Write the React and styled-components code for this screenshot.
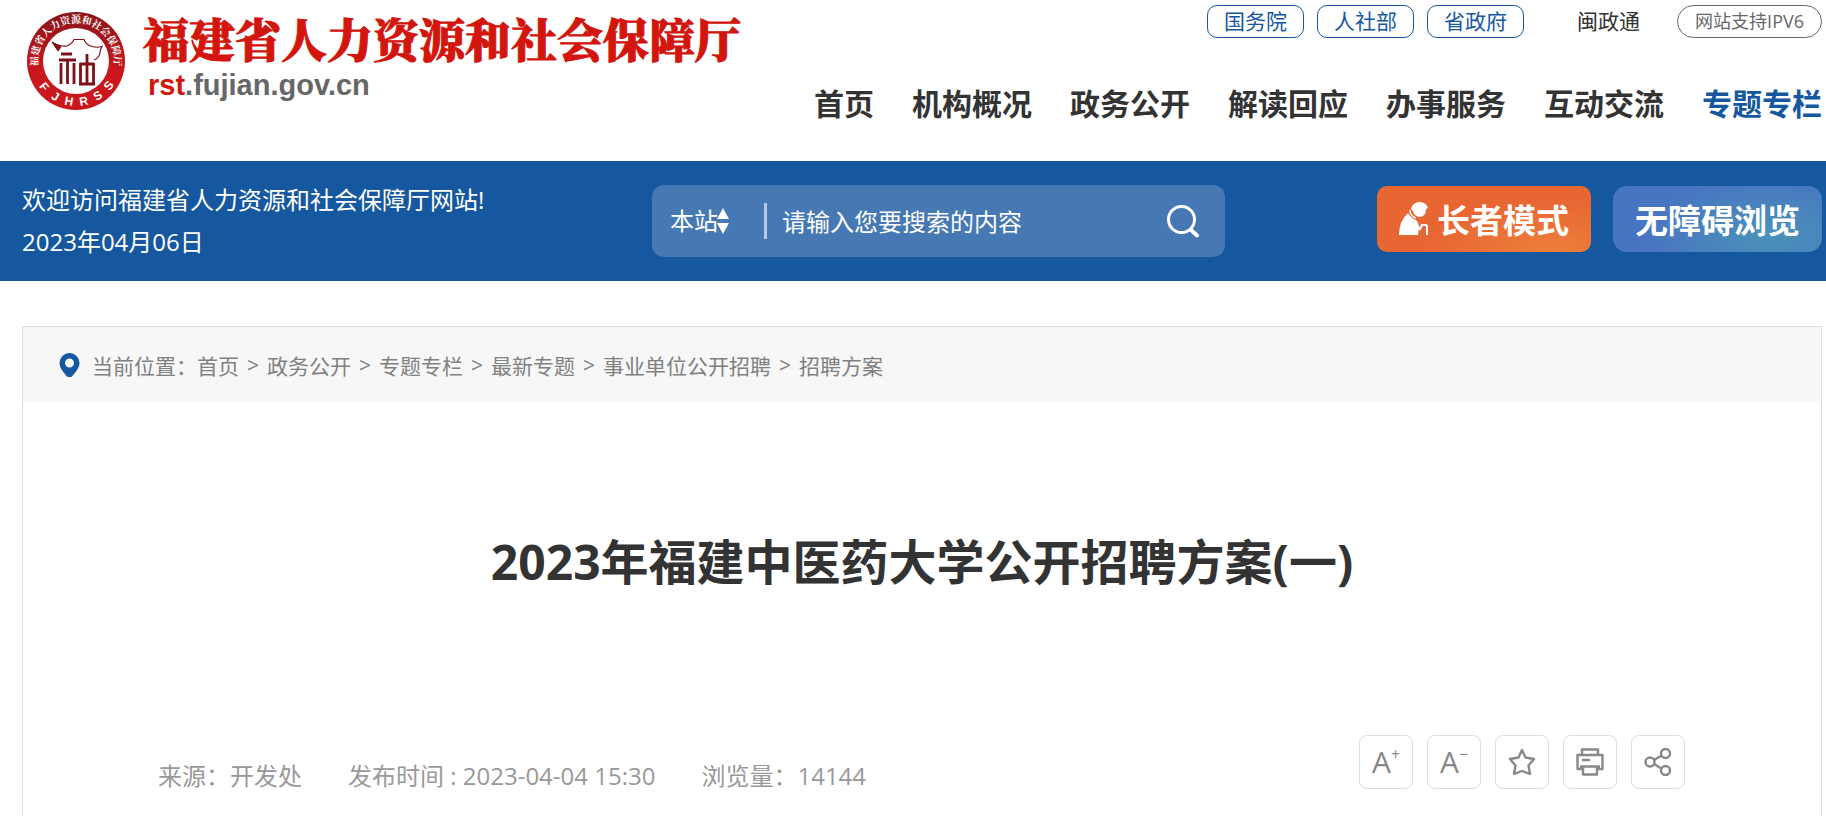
import React, { useState } from "react";
import styled, { createGlobalStyle } from "styled-components";

const GlobalStyle = createGlobalStyle`
  * {
    box-sizing: border-box;
  }
  body {
    margin: 0;
    background: white;
    color: #333;
    font-family: "Open Sans", "Noto Sans CJK SC", sans-serif;
    font-size: 24px;
  }
  a {
    color: inherit;
    text-decoration: none;
  }
  button, input, select {
    font-family: inherit;
  }
`;

const Header = styled.header`
  display: flex;
  justify-content: space-between;
  min-height: 161px;
  padding: 5px 4px 0 23px;
`;

const Brand = styled.a`
  display: flex;
  align-items: flex-start;
  gap: 14px;
  padding-top: 4px;
`;

const Emblem = styled.svg`
  width: 106px;
  height: 106px;
  text {
    fill: white;
    font-family: "Liberation Sans", "Noto Serif CJK SC", "Noto Sans CJK SC", sans-serif;
    font-weight: 700;
  }
`;

const BrandText = styled.div`
  display: flex;
  flex-direction: column;
  gap: 4px;
`;

const BrandName = styled.span`
  color: #d3160d;
  font-family: "Noto Serif CJK SC", "Noto Sans CJK SC", serif;
  font-size: 46px;
  font-weight: 900;
  line-height: 56px;
  white-space: nowrap;
  -webkit-text-stroke: 1px #d3160d;
`;

const Domain = styled.span`
  padding-left: 5px;
  color: #666;
  font-family: "Liberation Sans", sans-serif;
  font-size: 29px;
  font-weight: 700;
  line-height: 32px;
  em {
    color: #d3160d;
    font-style: normal;
  }
`;

const HeaderRight = styled.div`
  display: flex;
  flex-direction: column;
  align-items: flex-end;
  gap: 42px;
`;

const TopLinks = styled.div`
  display: flex;
  align-items: center;
  gap: 13px;
  font-size: 21px;
  white-space: nowrap;
`;

const PillLink = styled.a`
  height: 33px;
  padding: 0 ${props => (props.$round ? "17px" : "16px")};
  border: 1px solid ${props => (props.$round ? "#666" : "#1558a0")};
  border-radius: ${props => (props.$round ? "17px" : "10px")};
  color: ${props => (props.$round ? "#666" : "#1558a0")};
  font-size: ${props => (props.$round ? "18px" : "21px")};
  line-height: 31px;
`;

const PlainLink = styled.a`
  margin: 0 24px 0 40px;
  line-height: 33px;
`;

const Nav = styled.nav`
  display: flex;
  gap: 38px;
  font-size: 30px;
  font-weight: 700;
  line-height: 48px;
  white-space: nowrap;
`;

const NavLink = styled.a`
  color: ${props => (props.$active ? "#1558a0" : "#333")};
`;

const Banner = styled.div`
  display: flex;
  align-items: center;
  min-height: 120px;
  padding: 0 4px 0 22px;
  background: #1558a0;
  color: white;
`;

const Welcome = styled.p`
  flex: 0 0 35%;
  margin: 0;
  line-height: 42px;
  white-space: nowrap;
`;

const SearchBox = styled.form`
  display: flex;
  flex: 0 1 573px;
  align-items: center;
  height: 72px;
  padding: 0 25px 0 18px;
  border-radius: 12px;
  background: #4679b3;
`;

const Scope = styled.div`
  position: relative;
  width: 97px;
  border-right: 3px solid #b5c9e1;
  svg {
    position: absolute;
    top: 5px;
    left: 47px;
    pointer-events: none;
  }
`;

const ScopeSelect = styled.select`
  display: block;
  width: 100%;
  height: 36px;
  padding: 0;
  border: none;
  background: none;
  color: white;
  font-size: 24px;
  line-height: 36px;
  appearance: none;
  option {
    color: #333;
  }
`;

const SearchInput = styled.input`
  flex: 1;
  min-width: 0;
  height: 48px;
  padding: 0 15px;
  border: none;
  outline: none;
  background: none;
  color: white;
  font-size: 24px;
  &::placeholder {
    color: white;
    opacity: 1;
  }
`;

const SearchButton = styled.button`
  display: flex;
  padding: 0;
  border: none;
  background: none;
  color: white;
  cursor: pointer;
`;

const Modes = styled.div`
  display: flex;
  gap: 22px;
  margin: 0 0 4px auto;
`;

const ModeButton = styled.button`
  display: flex;
  align-items: center;
  gap: 8px;
  height: 66px;
  padding: 0 22px;
  border: none;
  border-radius: ${props => (props.$elder ? "10px" : "14px")};
  background: ${props =>
    props.$elder
      ? "radial-gradient(ellipse 60% 80% at 82% 100%, #ed7f3c, #e86632)"
      : "radial-gradient(ellipse 60% 90% at 75% 75%, #4a92b8, #4875c2)"};
  color: white;
  font-size: 33px;
  font-weight: 700;
  white-space: nowrap;
  cursor: pointer;
`;

const Article = styled.main`
  margin: 45px 4px 0 22px;
  border: 1px solid #ddd;
  border-bottom: none;
`;

const Breadcrumb = styled.nav`
  display: flex;
  align-items: center;
  height: 75px;
  margin-right: 1px;
  padding: 0 36px;
  background: #f7f7f7;
  color: #808080;
  font-size: 21px;
  white-space: nowrap;
  svg {
    margin-right: 12px;
  }
`;

const Separator = styled.span`
  margin: 0 8px;
`;

const Title = styled.h1`
  margin: 0;
  padding: 124px 24px 137px;
  font-size: 48px;
  font-weight: 700;
  line-height: 72px;
  text-align: center;
`;

const Meta = styled.div`
  display: flex;
  align-items: flex-start;
  justify-content: space-between;
  min-height: 81px;
  padding: 0 136px 0 135px;
`;

const MetaList = styled.div`
  display: flex;
  gap: 46px;
  padding-top: 23px;
  color: #999;
  line-height: 36px;
  white-space: nowrap;
`;

const Tools = styled.div`
  display: flex;
  gap: 14px;
`;

const ToolButton = styled.button`
  display: flex;
  align-items: center;
  justify-content: center;
  width: 54px;
  height: 54px;
  padding: 0;
  border: 1px solid #ddd;
  border-radius: 8px;
  background: white;
  color: #888;
  font-size: 30px;
  line-height: 30px;
  cursor: pointer;
  sup {
    align-self: flex-start;
    padding-top: 8px;
    font-size: 16px;
    line-height: 20px;
  }
`;

const emblemLetters = [
  ["F", 51],
  ["J", 30],
  ["H", 10],
  ["R", -11],
  ["S", -32],
  ["S", -53]
];

const departments = ["国务院", "人社部", "省政府"];

const navItems = [
  "首页",
  "机构概况",
  "政务公开",
  "解读回应",
  "办事服务",
  "互动交流",
  "专题专栏"
];

const crumbs = [
  "首页",
  "政务公开",
  "专题专栏",
  "最新专题",
  "事业单位公开招聘",
  "招聘方案"
];

const Logo = () => (
  <Emblem viewBox="0 0 106 106" aria-hidden="true">
    <defs>
      <linearGradient id="ring" x1="0" y1="0" x2="0" y2="1">
        <stop offset="0" stopColor="#8a1419" />
        <stop offset="0.6" stopColor="#c9171c" />
        <stop offset="1" stopColor="#c9171c" />
      </linearGradient>
      <path id="arc" d="M15.500 58 A38 38 0 1 1 90.500 58" />
    </defs>
    <circle cx="53" cy="52" r="49" fill="url(#ring)" />
    <circle cx="53" cy="52" r="33" fill="white" />
    <text fontSize="10">
      <textPath href="#arc" startOffset="50%" textAnchor="middle">
        福建省人力资源和社会保障厅
      </textPath>
    </text>
    {emblemLetters.map(([letter, angle], i) => (
      <text
        key={i}
        x="53"
        y="97"
        fontSize="12"
        textAnchor="middle"
        transform={`rotate(${angle} 53 52)`}
      >
        {letter}
      </text>
    ))}
    <g fill="none" stroke="#7d1016">
      <path
        d="M30 34 Q38 38 44 37 Q49 35 51 30.500 H61 Q63 36 69 37.500 Q74 39 79 37.500 Q77 41 77 44 Q76 49 71 51"
        strokeWidth="1.200"
      />
      <path d="M29 33 L38 38 L35 42 Z" fill="#7d1016" />
      <path
        d="M38 45 H49 M36 51 H53 M38 54 V75 M44.500 51 V75 M51 54 V75 M56 75 H72 M57.500 54 V75 M64 45 V75 M70.500 54 V75 M57 55 H71"
        strokeWidth="2.800"
      />
    </g>
  </Emblem>
);

const ElderIcon = () => (
  <svg width="30" height="34" viewBox="0 0 30 34" aria-hidden="true">
    <path d="M12 7 Q13 1 20 0 Q26 0 28 4 L29 6 L27 7 Q27 15 20 15 Q15 14 14 9 Z" fill="white" />
    <path d="M0 33 Q0 19 9 11 Q11 15 17 18 Q20 21 20 26 L19 33 Z" fill="white" />
    <path d="M11 8 Q11 14 17 16" fill="none" stroke="white" strokeWidth="1.500" />
    <path d="M18 24 L21 27 L23 23 H27 Q28 23 28 25 V33" fill="none" stroke="white" strokeWidth="2" />
  </svg>
);

const PinIcon = () => (
  <svg width="21" height="24" viewBox="0 0 21 24" aria-hidden="true">
    <path
      d="M10.500 0 A10 10 0 0 0 .5 10 C.5 15 5 20 8 23.500 Q10.500 25 13 23.500 C16 20 20.500 15 20.500 10 A10 10 0 0 0 10.500 0 Z M10.500 5.500 A4.500 4.500 0 1 1 10.500 14.500 A4.500 4.500 0 1 1 10.500 5.500 Z"
      fill="#1558a0"
      fillRule="evenodd"
    />
  </svg>
);

const ToolIcon = ({ children }) => (
  <svg
    width="28"
    height="28"
    viewBox="0 0 28 28"
    fill="none"
    stroke="currentColor"
    strokeWidth="2.400"
    strokeLinejoin="round"
    aria-hidden="true"
  >
    {children}
  </svg>
);

const App = () => {
  const [keyword, setKeyword] = useState("");

  return (
    <>
      <GlobalStyle />
      <Header>
        <Brand href="#">
          <Logo />
          <BrandText>
            <BrandName>福建省人力资源和社会保障厅</BrandName>
            <Domain>
              <em>rst</em>.fujian.gov.cn
            </Domain>
          </BrandText>
        </Brand>
        <HeaderRight>
          <TopLinks>
            {departments.map(name => (
              <PillLink href="#" key={name}>
                {name}
              </PillLink>
            ))}
            <PlainLink href="#">闽政通</PlainLink>
            <PillLink href="#" $round>
              网站支持IPV6
            </PillLink>
          </TopLinks>
          <Nav>
            {navItems.map(name => (
              <NavLink href="#" key={name} $active={name === "专题专栏"}>
                {name}
              </NavLink>
            ))}
          </Nav>
        </HeaderRight>
      </Header>

      <Banner>
        <Welcome>
          欢迎访问福建省人力资源和社会保障厅网站!
          <br />
          2023年04月06日
        </Welcome>
        <SearchBox onSubmit={e => e.preventDefault()}>
          <Scope>
            <ScopeSelect aria-label="搜索范围">
              <option>本站</option>
            </ScopeSelect>
            <svg width="12" height="26" viewBox="0 0 12 26" aria-hidden="true">
              <path d="M6 0 L12 11 H0 Z M0 15 H12 L6 26 Z" fill="white" />
            </svg>
          </Scope>
          <SearchInput
            type="text"
            aria-label="搜索"
            placeholder="请输入您要搜索的内容"
            value={keyword}
            onChange={e => setKeyword(e.target.value)}
          />
          <SearchButton type="submit" aria-label="搜索">
            <svg
              width="34"
              height="34"
              viewBox="0 0 34 34"
              fill="none"
              stroke="currentColor"
              strokeWidth="3"
              strokeLinecap="round"
            >
              <circle cx="15.500" cy="15.500" r="13" />
              <path d="M25 26 L31 31.500" strokeWidth="4" />
            </svg>
          </SearchButton>
        </SearchBox>
        <Modes>
          <ModeButton type="button" $elder>
            <ElderIcon />
            长者模式
          </ModeButton>
          <ModeButton type="button">无障碍浏览</ModeButton>
        </Modes>
      </Banner>

      <Article>
        <Breadcrumb>
          <PinIcon />
          <span>当前位置：</span>
          {crumbs.map((name, i) => (
            <React.Fragment key={name}>
              {i > 0 && <Separator>&gt;</Separator>}
              <a href="#">{name}</a>
            </React.Fragment>
          ))}
        </Breadcrumb>
        <Title>2023年福建中医药大学公开招聘方案(一)</Title>
        <Meta>
          <MetaList>
            <span>来源：开发处</span>
            <span>发布时间 : 2023-04-04 15:30</span>
            <span>浏览量：14144</span>
          </MetaList>
          <Tools>
            <ToolButton type="button" aria-label="放大字体">
              A<sup>+</sup>
            </ToolButton>
            <ToolButton type="button" aria-label="缩小字体">
              A<sup>−</sup>
            </ToolButton>
            <ToolButton type="button" aria-label="收藏">
              <ToolIcon>
                <path d="M14 2 L17.500 9.500 L26 11 L20.500 17.500 L22 26 L14 23 L6 26 L7.500 17.500 L2 11 L10.500 9.500 Z" />
              </ToolIcon>
            </ToolButton>
            <ToolButton type="button" aria-label="打印">
              <ToolIcon>
                <path d="M6 7 V1.500 H22 V7 M6 21 H1.500 V7 H26.500 V21 H22 M4 18.500 H24 M7 18.500 V26.500 H21 V18.500 M6 12 H14" />
              </ToolIcon>
            </ToolButton>
            <ToolButton type="button" aria-label="分享">
              <ToolIcon>
                <circle cx="6" cy="14" r="4.500" />
                <circle cx="21.500" cy="5.500" r="4.500" />
                <circle cx="21.500" cy="22.500" r="4.500" />
                <path d="M10 12 L17.500 7.500 M10 16 L17.500 20.500" />
              </ToolIcon>
            </ToolButton>
          </Tools>
        </Meta>
      </Article>
    </>
  );
};

export default App;
